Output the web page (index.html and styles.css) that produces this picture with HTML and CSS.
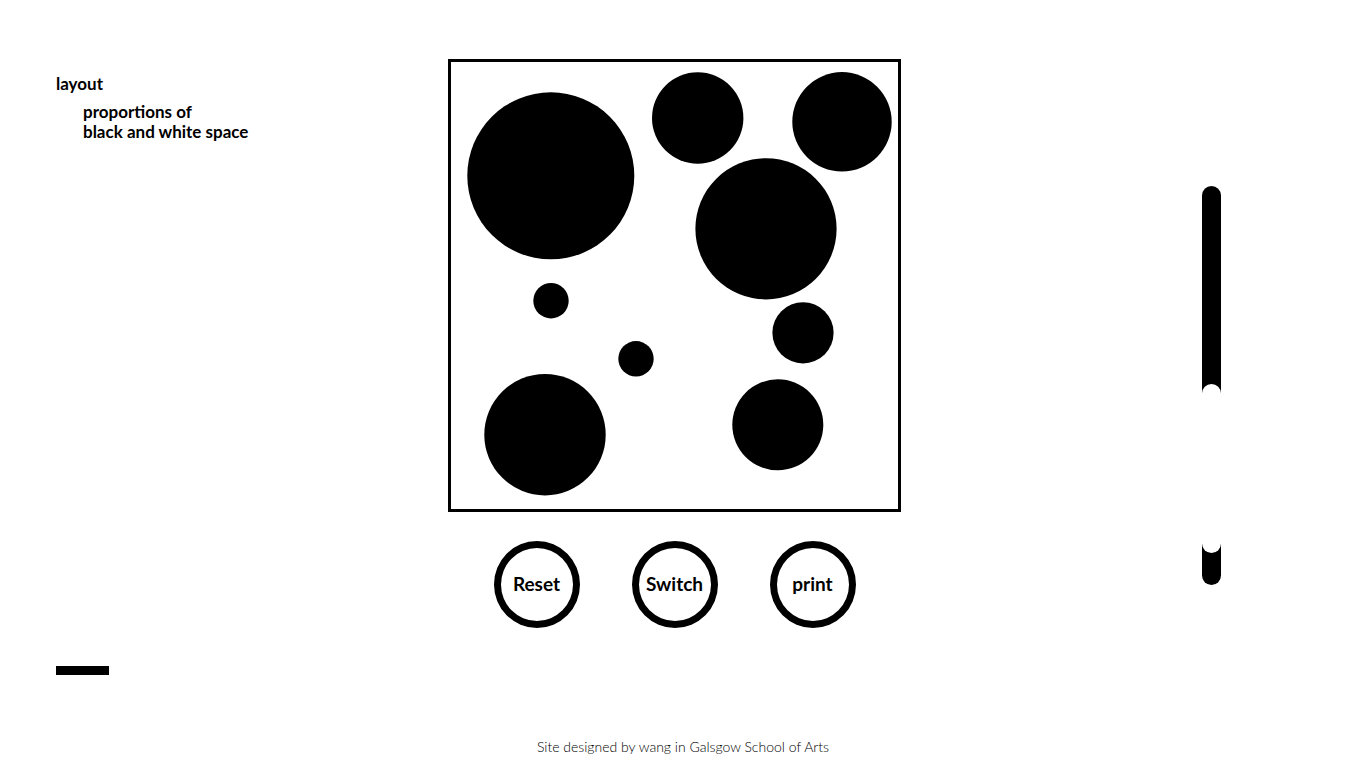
FILE: index.html
```html
<!DOCTYPE html>
<html lang="en">
<head>
    <meta charset="UTF-8">
    <meta name="viewport" content="width=device-width, initial-scale=1.0">
    <title>layout</title>
    <link rel="stylesheet" href="styles.css">
</head>
<body>
    <div class="main">
        <div class="side">
            <h1 class="title">layout</h1>
            <p class="subtitle">proportions of<br>black and white space</p>
            <div class="bar"></div>
        </div>

        <div class="stage">
            <div class="board">
                <svg class="dots" width="447" height="447" viewBox="0 0 447 447">
                    <circle cx="99.8" cy="113.8" r="83.5"/>
                    <circle cx="246.7" cy="56" r="45.7"/>
                    <circle cx="391" cy="59.8" r="49.7"/>
                    <circle cx="315" cy="166.8" r="70.6"/>
                    <circle cx="100" cy="238.7" r="17.7"/>
                    <circle cx="352" cy="270.8" r="30.6"/>
                    <circle cx="185" cy="296.8" r="17.7"/>
                    <circle cx="94" cy="372.7" r="60.7"/>
                    <circle cx="326.8" cy="362.8" r="45.5"/>
                </svg>
            </div>
            <div class="controls">
                <button class="round-btn" id="reset">Reset</button>
                <button class="round-btn" id="switch">Switch</button>
                <button class="round-btn" id="print">print</button>
            </div>
        </div>

        <div class="right">
            <div class="slider">
                <div class="thumb"></div>
            </div>
        </div>
    </div>

    <footer class="footer">Site designed by wang in Galsgow School of Arts</footer>
</body>
</html>
```

FILE: styles.css
```css
body {
    font-family: Lato, "Open Sans", sans-serif;
    background-color: #fff;
    color: #000;
    margin: 0;
    padding: 0;
}

.main {
    display: grid;
    grid-template-columns: 448px 453px 1fr;
    height: 739px;
}

.side {
    display: flex;
    flex-direction: column;
    padding: 74px 0 0 56px;
}

.title {
    margin: 0;
    font-size: 17px;
    line-height: 20px;
    font-weight: bold;
}

.subtitle {
    margin: 8px 0 0 27px;
    font-size: 17px;
    line-height: 20px;
    font-weight: bold;
}

.bar {
    width: 53px;
    height: 9px;
    background-color: #000;
    margin-top: 524px;
}

.stage {
    padding-top: 59px;
}

.board {
    width: 447px;
    height: 447px;
    border: 3px solid #000;
}

.dots {
    display: block;
}

.controls {
    display: flex;
    justify-content: center;
    gap: 52px;
    margin-top: 29px;
}

.round-btn {
    box-sizing: border-box;
    width: 86px;
    height: 87px;
    border: 7px solid #000;
    border-radius: 50%;
    background-color: #fff;
    color: #000;
    font-family: Lato, "Open Sans", sans-serif;
    font-size: 19px;
    font-weight: bold;
    padding: 0 0 2px;
    cursor: pointer;
}

.right {
    padding: 186px 0 0 301px;
}

.slider {
    position: relative;
    width: 19px;
    height: 399px;
    border-radius: 10px;
    background-color: #000;
}

.thumb {
    position: absolute;
    left: 0;
    top: 198px;
    width: 19px;
    height: 169px;
    border-radius: 10px;
    background-color: #fff;
}

.footer {
    text-align: center;
    font-size: 14px;
    line-height: 16px;
    font-weight: 300;
    color: #000;
}
```
